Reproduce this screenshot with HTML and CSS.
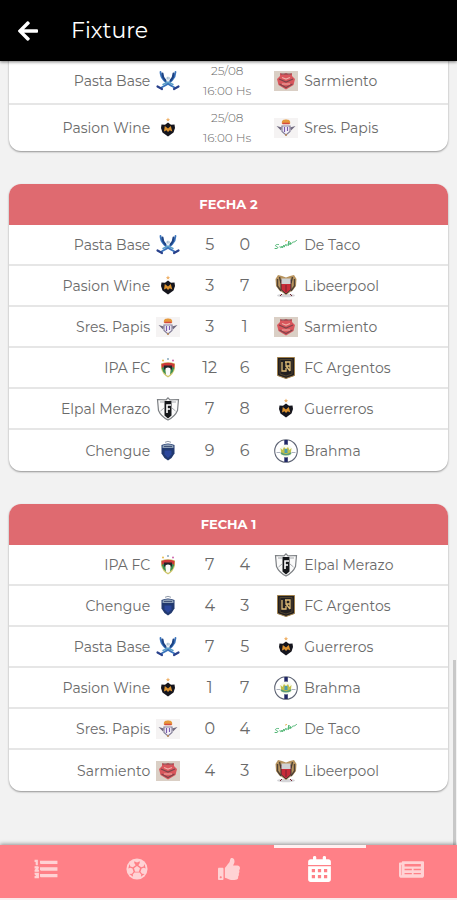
FILE: index.html
```html
<!DOCTYPE html>
<html lang="es">
<head>
<meta charset="utf-8">
<meta name="viewport" content="width=device-width, initial-scale=1">
<title>Fixture</title>
<link rel="stylesheet" href="styles.css">
</head>
<body>
<svg class="sprite" aria-hidden="true">
  <symbol id="pasta" viewBox="0 0 24 24">
    <g fill="none" stroke-linecap="round">
      <path d="M4.500 3C4.500 9 8 13.500 18.500 18.500" stroke="#3a74bd" stroke-width="1.800"/>
      <path d="M19.500 3C19.500 9 16 13.500 5.500 18.500" stroke="#3a74bd" stroke-width="1.800"/>
      <path d="M6.500 4.500c0 3 1.500 5.500 3 7M17.500 4.500c0 3-1.500 5.500-3 7" stroke="#1d4384" stroke-width="2"/>
      <path d="M1.500 17.500l4.500 2.500M22.500 17.500l-4.500 2.500" stroke="#29418c" stroke-width="2.200"/>
      <path d="M7 15.500l5-2.500 5 2.500" stroke="#5c9fc8" stroke-width="1.500"/>
    </g>
    <circle cx="12" cy="9.500" r="2" fill="#d3dfe8"/>
    <path d="M11 9h.8M12.600 9h.8" stroke="#6f93b5"/>
  </symbol>
  <symbol id="wine" viewBox="0 0 24 24">
    <path d="M12 1.500l.7 1.500 1.300.2-1 1 .3 1.300-1.300-.7-1.300.7.3-1.300-1-1 1.300-.2z" fill="#efb36c"/>
    <path d="M5.500 8.500l3.500.2 3-2.200 3 2.200 3.500-.2.5 3.500-1.500 4.500-5.500 4-5.500-4-1.500-4.500z" fill="#15151d"/>
    <path d="M8 15.500l.8-5.500 3.200 2.500 2.800-2.500 1.500 5.500-2.500-1.300-1.800 1.800-1.500-1.800z" fill="#dc922f"/>
  </symbol>
  <symbol id="sarmiento" viewBox="0 0 24 24">
    <path d="M0 2h24v20H0z" fill="#dacfc5"/>
    <path d="M6 4l3 1.500L12 4l3 1.500L18 4v3l3 3-1.500 6-7.500 4.500L4.500 16 3 10l3-3z" fill="#d9565c"/>
    <path d="M6.500 5h11M5 10l7 3 7-3M5.500 15l6.500 3.500 6.500-3.500" fill="none" stroke="#7c454b" stroke-width="1.200"/>
    <path d="M8 8.500l4 1.500 4-1.500M8 15h8" fill="none" stroke="#efb0a8" stroke-width="1.200"/>
  </symbol>
  <symbol id="papis" viewBox="0 0 24 24">
    <path d="M0 2h24v20H0z" fill="#f5f3f3"/>
    <path d="M8 8c-1-4 2-4.500 4-4.500S17 4 16 8z" fill="#e5983c"/>
    <path d="M8.500 7.500h7" stroke="#d44a42" stroke-width="1.600"/>
    <path d="M2.500 10l5.500 1.500-1 3zM21.500 10L16 11.500l1 3z" fill="#716b80"/>
    <path d="M8 10h8v5.500L12 19l-4-3.500z" fill="#f5f2fa" stroke="#858099" stroke-width="1.200"/>
    <path d="M10.500 11v5M13.500 11v4" fill="none" stroke="#7b5cae" stroke-width="1.200"/>
    <circle cx="12" cy="19" r="1" fill="#b88754"/>
  </symbol>
  <symbol id="taco" viewBox="0 0 24 24">
    <path d="M4.500 11.500c-3-.5-4 1.500-2 2s2 2.500-1.500 2M6 13.500c0 2 1.500 1.500 2-.5v2l2-3v2.200l2-3c0 2 1 2 2 .3l1-3.500-.5 4.500 2-3v2c2-1 1.500-2.500 2.500-2.500s1 .5 3.500-1.500" fill="none" stroke="#4fb573" stroke-width="1" stroke-linecap="round"/>
    <path d="M11 8.200l2-.8" stroke="#e9b85c"/>
  </symbol>
  <symbol id="libeer" viewBox="0 0 24 24">
    <ellipse cx="12" cy="21.500" rx="9" ry="1.800" fill="#d5d5d8"/>
    <path d="M8 2L4 1 1.500 5l.5 7 3 4 7 5 7-5 3-4 .5-7L20 1l-4 1-4 1.500z" fill="#b8945f"/>
    <path d="M3.500 5v7l3.500 5M20.500 5v7l-3.500 5M5.500 3l1.500 6M18.500 3L17 9" fill="none" stroke="#4f4235" stroke-width="1.400"/>
    <path d="M7 6h10v9.500L12 20l-5-4.500z" fill="#c82b39" stroke="#3a3337"/>
    <path d="M7.500 4.500h9v5.500h-9z" fill="#cfd1d3"/>
    <path d="M12 11v7M8 20l-2 2M16 20l2 2" stroke="#742532"/>
  </symbol>
  <symbol id="ipa" viewBox="0 0 24 24">
    <circle cx="7" cy="4.500" r="1" fill="#e7b94c"/><circle cx="12" cy="3" r="1" fill="#88a9bd"/><circle cx="17" cy="4.500" r="1" fill="#ce68ac"/>
    <path d="M5 7.500Q12 5 19 7.500v5Q17.500 18.500 12 21.500 6.500 18.500 5 12.500z" fill="#cfc66a"/>
    <path d="M5.500 8q6.500-2.500 13 0l-.3 4H5.800z" fill="#cd3838"/>
    <path d="M5.800 12L9 10l1 8.500Q6.500 16 5.800 12zM18.200 12L15 10l-1 8.500q3.500-2.500 4.200-6.500z" fill="#3b8e54"/>
    <path d="M8 9.500h8v4H8z" fill="#22242a"/>
    <path d="M9.500 12.500q2.500-2 5 0l-.5 6-2 1.500-2-1.500z" fill="#fafafa"/>
  </symbol>
  <symbol id="argentos" viewBox="0 0 24 24">
    <path d="M3.500 1.500h17v18L12 22.500l-8.500-3z" fill="#221f20" stroke="#a1814c"/>
    <path d="M6 3.500h12v14.500l-6 2-6-2z" fill="none" stroke="#4e412c"/>
    <path d="M8 6v9h4V12M11 6h5v9M12 6v4h4M12 10l4 5" fill="none" stroke="#ddbb76" stroke-width="1.300"/>
  </symbol>
  <symbol id="merazo" viewBox="0 0 24 24">
    <path d="M12 .8l2 2 8.500-.3-1 11Q19 19.500 12 23 5 19.500 2.500 13.500l-1-11 8.500.3z" fill="#fafafa" stroke="#7d8084" stroke-width="1.200"/>
    <path d="M4 5h4M4.500 14L8 11M20 5h-4M19.500 14L16 11" stroke="#a8aaae"/>
    <path d="M8.500 4h7v14.500L12 21.500l-3.500-3z" fill="#15171a"/>
    <path d="M11 16V8h4M11 12h3" fill="none" stroke="#fff" stroke-width="1.600"/>
  </symbol>
  <symbol id="chengue" viewBox="0 0 24 24">
    <path d="M9 3.300q3-2 6 0" fill="none" stroke="#929ba9"/>
    <path d="M5.500 6Q12 3 18.500 6v8.500q-2 4.500-6.500 7-4.500-2.500-6.500-7z" fill="#21396f"/>
    <path d="M6.500 6.500q5.500-2.500 11 0v2.500h-11z" fill="#8c9fb6"/>
    <path d="M8 7.500h8" stroke="#43547a"/>
    <path d="M8.500 11.500h7v4L12 19l-3.500-3.500z" fill="#2b479c"/>
  </symbol>
  <symbol id="brahma" viewBox="0 0 24 24">
    <circle cx="12" cy="12" r="11.300" fill="#fff" stroke="#616777" stroke-width="1.100"/>
    <path d="M10.300 1h3.500v22h-3.500z" fill="#202765"/>
    <circle cx="12" cy="12" r="6.500" fill="#f7faee"/>
    <path d="M6.500 9l2 2L10 8l2 2 2-2 1.500 3 2-2-1 6.500h-9z" fill="#c3c14a"/>
    <path d="M7 14q5 3.500 10 0" fill="none" stroke="#5a9c78" stroke-width="1.600"/>
    <path d="M10.500 10h3v4h-3z" fill="#4c9cae"/>
    <path d="M2.500 13.500h4M17.500 13.500h4" stroke="#adb2be"/>
  </symbol>
</svg>

<header class="topbar">
  <button class="back" type="button" aria-label="Volver">
    <svg viewBox="0 0 448 512"><path d="M257.500 445.100l-22.200 22.200c-9.400 9.400-24.600 9.400-33.900 0L7 273c-9.400-9.400-9.400-24.600 0-33.900L201.400 44.700c9.400-9.400 24.600-9.400 33.900 0l22.200 22.200c9.500 9.500 9.300 25-.4 34.300L136.600 216H424c13.300 0 24 10.700 24 24v32c0 13.300-10.700 24-24 24H136.600l120.500 114.800c9.800 9.300 10 24.800.4 34.300z"/></svg>
  </button>
  <h1>Fixture</h1>
</header>

<main class="feed">
  <section class="card">
    <table class="upcoming">
      <colgroup><col class="first"><col class="mid"><col class="mid"><col></colgroup>
      <tr><td><div class="team home">Pasta Base<svg><use href="#pasta"/></svg></div></td><td class="when" colspan="2">25/08<br>16:00 Hs</td><td><div class="team"><svg><use href="#sarmiento"/></svg>Sarmiento</div></td></tr>
      <tr><td><div class="team home">Pasion Wine<svg><use href="#wine"/></svg></div></td><td class="when" colspan="2">25/08<br>16:00 Hs</td><td><div class="team"><svg><use href="#papis"/></svg>Sres. Papis</div></td></tr>
    </table>
  </section>

  <section class="card">
    <table>
      <caption>FECHA 2</caption>
      <colgroup><col class="first"><col class="mid"><col class="mid"><col></colgroup>
      <tr><td><div class="team home">Pasta Base<svg><use href="#pasta"/></svg></div></td><td class="goals">5</td><td class="goals away">0</td><td><div class="team"><svg><use href="#taco"/></svg>De Taco</div></td></tr>
      <tr><td><div class="team home">Pasion Wine<svg><use href="#wine"/></svg></div></td><td class="goals">3</td><td class="goals away">7</td><td><div class="team"><svg><use href="#libeer"/></svg>Libeerpool</div></td></tr>
      <tr><td><div class="team home">Sres. Papis<svg><use href="#papis"/></svg></div></td><td class="goals">3</td><td class="goals away">1</td><td><div class="team"><svg><use href="#sarmiento"/></svg>Sarmiento</div></td></tr>
      <tr><td><div class="team home">IPA FC<svg><use href="#ipa"/></svg></div></td><td class="goals">12</td><td class="goals away">6</td><td><div class="team"><svg><use href="#argentos"/></svg>FC Argentos</div></td></tr>
      <tr><td><div class="team home">Elpal Merazo<svg><use href="#merazo"/></svg></div></td><td class="goals">7</td><td class="goals away">8</td><td><div class="team"><svg><use href="#wine"/></svg>Guerreros</div></td></tr>
      <tr><td><div class="team home">Chengue<svg><use href="#chengue"/></svg></div></td><td class="goals">9</td><td class="goals away">6</td><td><div class="team"><svg><use href="#brahma"/></svg>Brahma</div></td></tr>
    </table>
  </section>

  <section class="card">
    <table>
      <caption>FECHA 1</caption>
      <colgroup><col class="first"><col class="mid"><col class="mid"><col></colgroup>
      <tr><td><div class="team home">IPA FC<svg><use href="#ipa"/></svg></div></td><td class="goals">7</td><td class="goals away">4</td><td><div class="team"><svg><use href="#merazo"/></svg>Elpal Merazo</div></td></tr>
      <tr><td><div class="team home">Chengue<svg><use href="#chengue"/></svg></div></td><td class="goals">4</td><td class="goals away">3</td><td><div class="team"><svg><use href="#argentos"/></svg>FC Argentos</div></td></tr>
      <tr><td><div class="team home">Pasta Base<svg><use href="#pasta"/></svg></div></td><td class="goals">7</td><td class="goals away">5</td><td><div class="team"><svg><use href="#wine"/></svg>Guerreros</div></td></tr>
      <tr><td><div class="team home">Pasion Wine<svg><use href="#wine"/></svg></div></td><td class="goals">1</td><td class="goals away">7</td><td><div class="team"><svg><use href="#brahma"/></svg>Brahma</div></td></tr>
      <tr><td><div class="team home">Sres. Papis<svg><use href="#papis"/></svg></div></td><td class="goals">0</td><td class="goals away">4</td><td><div class="team"><svg><use href="#taco"/></svg>De Taco</div></td></tr>
      <tr><td><div class="team home">Sarmiento<svg><use href="#sarmiento"/></svg></div></td><td class="goals">4</td><td class="goals away">3</td><td><div class="team"><svg><use href="#libeer"/></svg>Libeerpool</div></td></tr>
    </table>
  </section>
  <div class="thumb"></div>
</main>

<nav class="tabs">
  <a href="#tabla" aria-label="Tabla"><svg class="list" viewBox="1 1 22 22"><path d="M7 13V11H22V13H7M7 19V17H22V19H7M7 7V5H22V7H7M3 8V5H2V4H4V8H3M2 17V16H5V20H2V19H4V18.500H3V17.500H4V17H2M4.250 10A.75.75 0 0 1 5 10.750C5 10.950 4.920 11.140 4.790 11.270L3.120 13H5V14H2V13.080L4 11H2V10H4.250Z"/></svg></a>
  <a href="#partidos" aria-label="Partidos"><svg viewBox="0 0 24 24"><circle cx="12" cy="12" r="11.500"/><path class="cut" d="M9 3.500l3 1.500 3-1.500v2L13.500 8l3 2.200 2.700-1 1-2.700 1.300 5-2.200-1-2.300 1-1.200 3.500 1.700 2.300 2.800.2-4 3 .3-2.500-1.800-2.300H9.200l-1.800 2.300.3 2.500-4-3 2.800-.2L8.200 15 7 11.500l-2.300-1-2.200 1 1.300-5 1 2.700 2.700 1L10.500 8 9 5.500z"/><path d="M12 8.700l3.300 2.400-1.300 3.900h-4l-1.300-3.900z"/></svg></a>
  <a href="#votos" aria-label="Votos"><svg viewBox="0 0 512 512"><path d="M104 224H24c-13.255 0-24 10.745-24 24v240c0 13.255 10.745 24 24 24h80c13.255 0 24-10.745 24-24V248c0-13.255-10.745-24-24-24zM64 472c-13.255 0-24-10.745-24-24s10.745-24 24-24 24 10.745 24 24-10.745 24-24 24zM384 81.452c0 42.416-25.970 66.208-33.277 94.548h101.723c33.397 0 59.397 27.746 59.553 58.098.084 17.938-7.546 37.249-19.439 49.197l-.11.11c9.836 23.337 8.237 56.037-9.308 79.469 8.681 25.895-.069 57.704-16.382 74.757 4.298 17.598 2.244 32.575-6.148 44.632C440.202 511.587 389.616 512 346.839 512l-2.845-.001c-48.287-.017-87.806-17.598-119.560-31.725-15.957-7.099-36.821-15.887-52.651-16.178-6.540-.12-11.783-5.457-11.783-11.998v-213.770c0-3.200 1.282-6.271 3.558-8.521 39.614-39.144 56.648-80.587 89.117-113.111 14.804-14.832 20.188-37.236 25.393-58.902C282.515 39.293 291.817 0 312 0c24 0 72 8 72 81.452z"/></svg></a>
  <a href="#fixture" class="active" aria-label="Fixture" aria-current="page"><svg viewBox="0 0 448 512"><path fill-rule="evenodd" d="M448 176H0v-64c0-26.500 21.500-48 48-48h48V24q0-24 32-24t32 24v40h128V24q0-24 32-24t32 24v40h48c26.500 0 48 21.500 48 48zM0 200h448v264c0 26.500-21.500 48-48 48H48c-26.500 0-48-21.500-48-48zM72 256v64h64v-64zm120 0v64h64v-64zm120 0v64h64v-64zM72 376v64h64v-64zm120 0v64h64v-64zm120 0v64h64v-64z"/></svg></a>
  <a href="#noticias" aria-label="Noticias"><svg class="wide" viewBox="0 0 576 384"><path fill-rule="evenodd" d="M552 0H88C75 0 64 11 64 24v8H24C11 32 0 43 0 56v272c0 31 25 56 56 56h472c27 0 48-22 48-48V24c0-13-11-24-24-24zM46 80h12v240c0 8-12 8-12 0zM128 64v56h376V64zM128 176v32h168v-32zM336 176v32h168v-32zM128 272v32h168v-32zM336 272v32h168v-32z"/></svg></a>
</nav>
</body>
</html>
```
FILE: styles.css
```css
* {
  box-sizing: border-box;
}

body {
  margin: 0;
  height: 100vh;
  display: flex;
  flex-direction: column;
  background: #f2f2f2;
  color: #6a6a6a;
  font-family: Montserrat, Inter, sans-serif;
  font-size: 14px;
  font-weight: 400;
}

.sprite {
  position: absolute;
  width: 0;
  height: 0;
}

.topbar {
  flex: none;
  height: 61px;
  padding: 0 18px;
  display: flex;
  align-items: center;
  gap: 33px;
  background: #000;
  color: #fff;
  box-shadow: 0 1px 3px rgba(0, 0, 0, 0.5);
  z-index: 1;
}

.topbar h1 {
  margin: 0;
  font-size: 22px;
  font-weight: 400;
}

.back {
  display: flex;
  padding: 0;
  border: 0;
  background: none;
}

.back svg {
  width: 20px;
  height: 24px;
  fill: #fff;
}

.feed {
  flex: 1;
  min-height: 0;
  position: relative;
  padding: 0 9px 54px;
  display: flex;
  flex-direction: column;
  justify-content: flex-end;
  gap: 33px;
  overflow: hidden;
}

.card {
  flex: none;
  overflow: hidden;
  border-radius: 12px;
  background: #fff;
  box-shadow: 0 1px 2px rgba(0, 0, 0, 0.4);
}

.card:first-child {
  border-radius: 0 0 12px 12px;
}

table {
  width: 100%;
  table-layout: fixed;
  border-spacing: 0;
}

caption {
  height: 41px;
  background: #df6a70;
  color: #fff;
  font-size: 13px;
  font-weight: 700;
  line-height: 41px;
}

.first {
  width: 39%;
}

.mid {
  width: 47px;
}

td {
  height: 41px;
  padding: 0;
  border-bottom: 2px solid #e6e6e6;
}

.upcoming td {
  height: 46px;
}

tr:last-child td {
  border-bottom: 0;
}

.team {
  display: flex;
  align-items: center;
  gap: 6px;
  white-space: nowrap;
}

.home {
  justify-content: flex-end;
}

.team svg {
  flex: none;
  width: 24px;
  height: 24px;
}

.goals {
  padding-left: 12px;
  text-align: center;
  font-size: 16px;
}

.away {
  padding: 0 12px 0 0;
}

.when {
  text-align: center;
  font-size: 12px;
  font-weight: 300;
  line-height: 20px;
}

.thumb {
  position: absolute;
  right: 1px;
  bottom: 0;
  width: 3px;
  height: 185px;
  background: #c8c8c8;
}

.tabs {
  flex: none;
  height: 55px;
  display: flex;
  background: #ff8087;
  border-bottom: 2px solid #fbeced;
  box-shadow: 0 -1px 4px rgba(0, 0, 0, 0.4);
  z-index: 1;
}

.tabs a {
  flex: 1;
  display: flex;
  align-items: center;
  justify-content: center;
  border-top: 3px solid transparent;
  border-bottom: 8px solid transparent;
}

.tabs .active {
  border-top-color: #fff0f0;
}

.tabs svg {
  width: 22px;
  height: 22px;
  fill: #ffd2d4;
}

.tabs .list {
  width: 24px;
  height: 24px;
  stroke: #ffd2d4;
  stroke-width: 1;
}

.tabs .active svg {
  width: 23px;
  height: 26px;
  fill: #fff;
}

.tabs .wide {
  width: 25px;
  height: 17px;
}

.cut {
  fill: #ff8087;
}
```
